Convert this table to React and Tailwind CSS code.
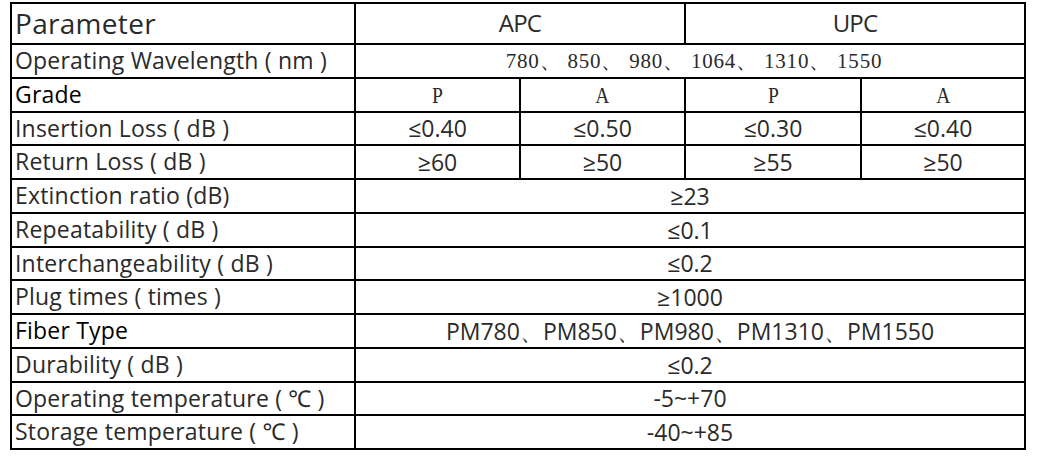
const rows = [
  { label: 'Operating Wavelength ( nm )', wave: '780、 850、 980、 1064、 1310、 1550' },
  { label: 'Grade', grade: true, dark: true },
  { label: 'Insertion Loss ( dB )', cells: ['≤0.40', '≤0.50', '≤0.30', '≤0.40'] },
  { label: 'Return Loss ( dB )', cells: ['≥60', '≥50', '≥55', '≥50'] },
  { label: 'Extinction ratio (dB)', span: '≥23' },
  { label: 'Repeatability ( dB )', span: '≤0.1' },
  { label: 'Interchangeability ( dB )', span: '≤0.2' },
  { label: 'Plug times ( times )', span: '≥1000' },
  { label: 'Fiber Type', span: 'PM780、PM850、PM980、PM1310、PM1550', dark: true },
  { label: 'Durability ( dB )', span: '≤0.2' },
  { label: 'Operating temperature ( ℃ )', span: '-5~+70' },
  { label: 'Storage temperature ( ℃ )', span: '-40~+85' },
];

const sans = "font-['Open_Sans','Noto_Sans',sans-serif]";
const serif = "font-['Liberation_Serif',serif]";

function Cell({ children, className = '', span = 1 }) {
  const spanClass = span === 4 ? 'col-span-4' : span === 2 ? 'col-span-2' : '';
  return (
    <div className={`bg-white flex items-center justify-center leading-none ${spanClass} ${className}`}>
      {children}
    </div>
  );
}

export default function App() {
  return (
    <div className="w-[1046px] h-[458px] bg-white pt-[2px] pl-[10px]">
      <div
        className={`inline-grid bg-black gap-[2px] p-[2px] grid-cols-[342px_163px_163px_174px_162px] grid-rows-[39px_32px_32px_31px_32px_32px_32px_31px_32px_32px_32px_31px_32px] text-[#2a2a2a] ${sans}`}
      >
        <div className="bg-white flex items-center pl-[3px] text-[28px] leading-none pb-[2px] tracking-[0.3px]">
          Parameter
        </div>
        <Cell span={2} className="text-[24px] tracking-[-0.8px] pb-[2px]">APC</Cell>
        <Cell span={2} className="text-[24px] tracking-[-0.8px] pb-[2px]">UPC</Cell>

        {rows.map((r) => (
          <Row key={r.label} r={r} />
        ))}
      </div>
    </div>
  );
}

function Row({ r }) {
  const label = (
    <div
      className={`bg-white flex items-center pl-[3px] text-[23px] leading-none pb-[1px] whitespace-pre tracking-[0.2px] ${r.dark ? 'text-black' : ''}`}
    >
      {r.label}
    </div>
  );
  if (r.wave) {
    return (
      <>
        {label}
        <Cell span={4} className={`${serif} text-[21px] tracking-[0.8px]`}>
          <span className="pl-[8px]">{r.wave}</span>
        </Cell>
      </>
    );
  }
  if (r.grade) {
    return (
      <>
        {label}
        {['P', 'A', 'P', 'A'].map((g, i) => (
          <Cell key={i} className={`${serif} text-[23px]`}>
            <span className="inline-block scale-x-[0.85]">{g}</span>
          </Cell>
        ))}
      </>
    );
  }
  if (r.cells) {
    return (
      <>
        {label}
        {r.cells.map((c, i) => (
          <Cell key={i} className="text-[23px]">{c}</Cell>
        ))}
      </>
    );
  }
  return (
    <>
      {label}
      <Cell span={4} className="text-[23px]">{r.span}</Cell>
    </>
  );
}
